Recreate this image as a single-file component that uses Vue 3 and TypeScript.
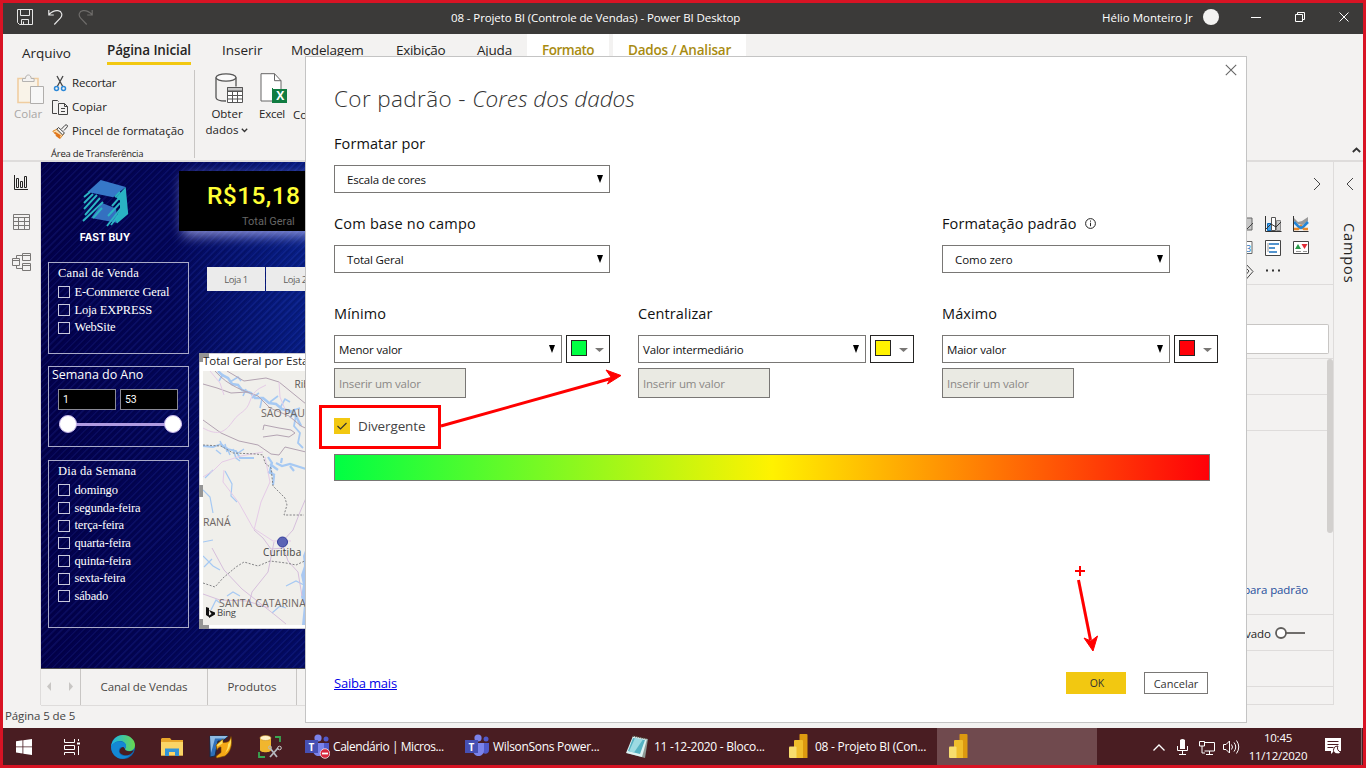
<script setup lang="ts">
interface Scale { label: string; option: string; cls: string }
interface TaskButton { label: string; icon: 'teams' | 'notepad' | 'pbi'; busy?: boolean; active?: boolean }

const channels: string[] = ['E-Commerce Geral', 'Loja EXPRESS', 'WebSite']
const weekdays: string[] = ['domingo', 'segunda-feira', 'terça-feira', 'quarta-feira', 'quinta-feira', 'sexta-feira', 'sábado']

const scales: Scale[] = [
  { label: 'Mínimo', option: 'Menor valor', cls: 'min' },
  { label: 'Centralizar', option: 'Valor intermediário', cls: 'mid' },
  { label: 'Máximo', option: 'Maior valor', cls: 'max' },
]

const tasks: TaskButton[] = [
  { label: 'Calendário | Micros...', icon: 'teams', busy: true },
  { label: 'WilsonSons Power...', icon: 'teams' },
  { label: '11 -12-2020 - Bloco...', icon: 'notepad' },
  { label: '08 - Projeto BI (Con...', icon: 'pbi' },
  { label: '', icon: 'pbi', active: true },
]
</script>

<template>
  <div class="screen">
    <header class="titlebar">
      <div class="quick">
        <svg width="16" height="16" viewBox="0 0 16 16" fill="none" stroke="#e6e6e6"><path d="M.5.5h15v15H2.500l-2-2zM3.500.5v6h9v-6M4.500 15.500v-5h7v5M6.500 12.500v3" /></svg>
        <svg width="15" height="16" viewBox="0 0 15 16" fill="none" stroke="#e6e6e6" stroke-width="1.200"><path d="M.8 1v5h5M1 5.500C4 2.500 7 1.200 10 1.700c4 .6 5 4.500 2.300 7.500L6.300 15.500" /></svg>
        <svg width="15" height="16" viewBox="0 0 15 16" fill="none" stroke="#6e6c6a" stroke-width="1.200"><path d="M14.200 1v5h-5M14 5.500C11 2.500 8 1.200 5 1.700c-4 .6-5 4.500-2.300 7.500L8.700 15.500" /></svg>
      </div>
      <span class="app-title">08 - Projeto BI (Controle de Vendas) - Power BI Desktop</span>
      <span class="user">Hélio Monteiro Jr</span>
      <span class="avatar"></span>
      <svg class="win-btns" width="100" height="12" viewBox="0 0 100 12" fill="none" stroke="#fff"><path d="M0 6.500h10M44.500 3.500h7v7h-7zM46.500 3.500v-2h7v7h-2M88.500 1.500l9 9M97.500 1.500l-9 9" /></svg>
    </header>

    <nav class="tabs">
      <span class="tab file">Arquivo</span>
      <span class="tab home">Página Inicial</span>
      <span class="tab insert">Inserir</span>
      <span class="tab model">Modelagem</span>
      <span class="tab view">Exibição</span>
      <span class="tab help">Ajuda</span>
      <span class="tab ctx format">Formato</span>
      <span class="tab ctx data">Dados / Analisar</span>
    </nav>

    <section class="ribbon">
      <div class="paste">
        <svg width="28" height="32" viewBox="0 0 28 32" fill="none"><path d="M1 4.500h20v24H1z" stroke="#f0cda0" stroke-width="1.600" fill="#f9f3e8" /><path d="M5.500 7.500v-3h3c0-2 1-3.500 2.800-3.500s2.800 1.500 2.800 3.500h3v3z" stroke="#b5b3b1" fill="#f3f2f1" /><path d="M13.500 12.500h13v17h-13z" stroke="#b0aeac" fill="#f7f7f7" /></svg>
        <span>Colar</span>
      </div>
      <div class="clip">
        <div class="clip-row">
          <svg width="17" height="17" viewBox="0 0 17 17" fill="none"><path d="M5 1l6 11M11 1L5 12" stroke="#444" stroke-width="1.300" /><circle cx="4.500" cy="13.500" r="2" stroke="#2b88d8" stroke-width="1.500" /><circle cx="11.500" cy="13.500" r="2" stroke="#2b88d8" stroke-width="1.500" /></svg>
          <span class="t-cut">Recortar</span>
        </div>
        <div class="clip-row">
          <svg width="17" height="17" viewBox="0 0 17 17" fill="none" stroke="#444"><path d="M5 14.500H.5V1.500h5l1 1M6.500 4.500h6l3 3v8h-9zM12.500 4.500v3h3M9 9.500h4M9 12.500h4" /></svg>
          <span class="t-copy">Copiar</span>
        </div>
        <div class="clip-row">
          <svg width="17" height="17" viewBox="0 0 17 17" fill="none"><path d="M.8 8.200l4.200-2 6.500 5-3.500 4.300z" fill="#fbdcae" stroke="#e08a26" /><path d="M2.500 9.500l6 3.500M4 12l4 3" stroke="#e0761b" stroke-width="1.800" /><path d="M6.500 4.500l6 5.500-2 1.800L4.800 6.300zM9.500 6L13 2.300c1-1.100 3.300-.2 2.300 1.500L12 7.500" stroke="#444" fill="#f3f2f1" /></svg>
          <span class="t-brush">Pincel de formatação</span>
        </div>
        <div class="group-name">Área de Transferência</div>
      </div>
      <div class="big get">
        <svg width="28" height="31" viewBox="0 0 28 31" fill="none" stroke="#555"><path d="M1 4.500v20c0 2 4 3.500 10 3.500M21 4.500v9" fill="none" stroke-width="1.300" /><ellipse cx="11" cy="4.500" rx="10" ry="3.700" fill="#fafafa" stroke-width="1.300" /><path d="M12.500 14.500h15v15h-15z" fill="#fff" /><path d="M12.500 14.500h15v3.500h-15z" fill="#c8c8c8" /><path d="M12.500 18.500h15M12.500 22.500h15M12.500 26h15M17.500 18v12M22.500 18v12" /></svg>
        <span>Obter</span>
        <span class="get2">dados<svg width="7" height="5" viewBox="0 0 7 5" fill="none" stroke="#333" stroke-width="1.300"><path d="M.8.8l2.700 2.700L6.200.8" /></svg></span>
      </div>
      <div class="big excel">
        <svg width="27" height="31" viewBox="0 0 27 31"><path d="M1 .7h13.500l6.500 7V28H1z" fill="#fff" stroke="#666" /><path d="M14.500.7v7H21" fill="none" stroke="#666" /><path d="M12 15h1v1h14v14H12z" fill="#107c41" /><text x="20" y="27" class="xl-mark">X</text></svg>
        <span>Excel</span>
      </div>
      <div class="conn">Co</div>
      <svg class="collapse" width="9" height="6" viewBox="0 0 9 6" fill="none" stroke="#333" stroke-width="1.800"><path d="M.8 5l3.700-3.500L8.200 5" /></svg>
    </section>

    <main class="workspace">
      <aside class="rail">
        <svg width="14" height="15" viewBox="0 0 14 15" fill="none" stroke="#252423"><path d="M.5 0v14.500H14M2.500 3.500h2v9h-2zM6.500 6.500h2v6h-2zM10.500 1.500h2v11h-2z" /></svg>
        <svg width="17" height="16" viewBox="0 0 17 16" fill="none" stroke="#797775"><path d="M.5.5h16v15H.5zM.5 3.500h16M.5 7.500h16M.5 11.500h16M5.500 3.500v12M11.500 3.500v12" /></svg>
        <svg width="19" height="19" viewBox="0 0 19 19" fill="none" stroke="#797775"><path d="M.5 5.500h7v7h-7zM.5 7.500h7M10.500.5h8v7h-8zM10.500 2.500h8M10.500 10.500h8v7h-8zM10.500 12.500h8M4.500 5.500v-3h6M4.500 12.500v3h6" /></svg>
      </aside>

      <div class="center">
        <div class="canvas">
          <div class="canvas-top">
            <div class="brand">
              <svg width="50" height="50" viewBox="80 178 50 50">
                <path d="M102 203l14 5.500 2 14.500-27-5z" fill="#3470c0" />
                <path d="M100.700 180l25 7-12.500 10.200-25.700-5.200z" fill="#3678c8" />
                <path d="M125.700 187l2.500 27-11.200 9.500-2-5 5-9 0-9-4-3z" fill="#29b3c3" />
                <path d="M90 192l-6 5M93 194l-9 9M97 195l-13 14M100 198l-15 17M103 202l-20 19M102 208l-9 10M120 192l-5 5M120 197l-8 9M120 203l-12 13M121 208l-14 18M118 216l-7 9" stroke="#2bb5c4" stroke-width="1.900" />
                <path d="M86 193h17v11" fill="none" stroke="#2bb5c4" stroke-width="0" />
              </svg>
              <span>FAST BUY</span>
            </div>
            <div class="kpi"><b>R$15,18</b><small>Total Geral</small></div>
          </div>
          <div class="canvas-body">
            <div class="slicers">
              <div class="slicer ch">
                <h4 class="ch-title">Canal de Venda</h4>
                <div v-for="c in channels" :key="c" class="opt"><i></i><span>{{ c }}</span></div>
              </div>
              <div class="slicer wk">
                <h4>Semana do Ano</h4>
                <div class="range"><span>1</span><span>53</span></div>
                <div class="slider"><i></i><i></i></div>
              </div>
              <div class="slicer dy">
                <h4>Dia da Semana</h4>
                <div v-for="d in weekdays" :key="d" class="opt"><i></i><span>{{ d }}</span></div>
              </div>
            </div>
            <div class="visuals">
              <div class="stores"><span>Loja 1</span><span>Loja 2</span></div>
              <div class="map">
                <div class="map-title">Total Geral por Esta</div>
                <svg width="160" height="254" viewBox="203 371 160 254" fill="none">
                  <path d="M203 371h160v254H203z" fill="#f0efeb" />
                  <path d="M306 548l-3 8 1 10-3 9 2 10-2 12 3 8-2 20h6z" fill="#a9c8f2" />
                  <path d="M218 371l4 4 6 3 4 6 6 1 4 5 9 3 4 5 8 0 6 5 7 1 6 5 8 2 6 5 5 10" stroke="#a6c9f3" stroke-width="2.600" />
                  <path d="M223 374l-4 7M230 382l8-5 3 4M246 389l-3 7M252 398l7-5M262 399l-2 9M270 402l8-6M280 408l5-9 5 3M288 412l12-4M295 409l-5 9" stroke="#a6c9f3" stroke-width="1.600" />
                  <path d="M296 415l-2 11 6 7-2 10 5 5M203 446l10 1 8-3 6 5 9 2 4 7 14 0" stroke="#a6c9f3" stroke-width="1.800" />
                  <path d="M220 441l3 6 4 1 3 7M227 452l-2-8M233 449l3 9 4 3M238 453l6-4M216 450l5 4" stroke="#a6c9f3" stroke-width="1.500" />
                  <path d="M268 457l4 6-2 7 4 6-1 9M276 463l6 3 8-2 16 5M281 463l1-5M290 466l4 5M270 464l8 6M268 472l7 3" stroke="#a6c9f3" stroke-width="2.200" />
                  <path d="M203 490l7 7 3 16M225 471l7 13-1 12 6 6M203 542l10-2M213 470l-8 8M203 556l10 10 7 4M204 567l8-8M211 610l5-10 4 3M286 586l10-5 8 4M240 596l-7-4-6 4M272 613l8-7 6 2" stroke="#a6c9f3" stroke-width="1.200" />
                  <path d="M215 371c14 16 30 20 43 25l12 12 19 8 12 10 17 8M203 384l14 4 14 5 17-1M227 371l17 10 22-3 13 4 27 22M203 420l18 13 18 8 19 4 13 9 8 1 6-8 21 5M263 430l1-5 15 3 12 2 4 3-6 4-12-2-14 2" stroke="#b3a3b2" />
                  <path d="M203 428c16 9 23 3 30-7s13-8 17-20 11-13 16-16M279 382l1 15 7 17M203 477l11-7 8-8 19-6 22-4M224 470l-1 12 16 21 14 25 20 13 18 0M254 530l7-28 9-20-5-25M210 371l10 12 4 12" stroke="#e5cbe7" />
                  <path d="M254 530l9 8 8 11 13-1M274 542l-6 30-16 20-3 12M282 542l11-12 7-18 6-14M282 543l6 18 10 11 4 24M203 594l17 6 27 1 22 7M212 548l12 22 18 19 33 26 11 9" stroke="#d6bfdc" />
                  <path d="M203 445l18 1 12 7 23 1 7 1 2 8 6 5 2 18 12 12 2 7-3 10 20 0M203 583l12 4 8-9 13-11 8-5 14 4 12-5 16 2 10 2 13-6" stroke="#77777b" stroke-width=".9" stroke-dasharray="2 1.500" />
                  <circle cx="282.500" cy="542" r="5" fill="#5b64b5" stroke="#333d9b" />
                  <text x="294.500" y="388" class="m1">Ribeirão</text>
                  <text x="261" y="416.500" class="m2">SÃO PAULO</text>
                  <text x="203" y="526" class="m2 pr">RANÁ</text>
                  <text x="263" y="555.500" class="m3">Curitiba</text>
                  <text x="219" y="606.500" class="m2 sc">SANTA CATARINA</text>
                  <path d="M206 607l3 1v9l-3-2zM209 610l6 2.500v2l-6 3.500v-2.500l2.500-1.500z" fill="#111" />
                  <text x="217" y="616" class="m3 bing">Bing</text>
                </svg>
                <i class="grip tl"></i><i class="grip ml"></i><i class="grip bl"></i>
              </div>
            </div>
          </div>
        </div>
        <div class="pages">
          <span class="arrows"><i class="prev"></i><i class="next"></i></span>
          <span class="p1">Canal de Vendas</span>
          <span class="p2">Produtos</span>
        </div>
      </div>

      <aside class="pane">
        <div class="viz-head"><svg width="8" height="14" viewBox="0 0 8 14" fill="none" stroke="#444"><path d="M1 1l6 6-6 6" /></svg></div>
        <div class="viz-icons">
          <svg width="86" height="68" viewBox="1247 214 86 68" fill="none">
            <path d="M1247 218h5v12h-5" fill="#c8c8c8" stroke="#666" /><path d="M1247 229l6-6" stroke="#444" />
            <path d="M1247 241.500h5v12h-5" stroke="#666" fill="#fff" /><text x="1246" y="251.500" class="three">3</text>
            <path d="M1245 263l8 8.500-7 8M1245 267l4 4-4 5" stroke="#444" />
            <path d="M1267.500 223.500h4v7h-4z" fill="#4ba3e8" stroke="#0d6ab8" /><path d="M1271.500 217.500h4v13h-4z" fill="#fff" stroke="#555" /><path d="M1276.500 220.500h4v10h-4z" fill="#c8c8c8" stroke="#888" /><path d="M1265.500 216v15.500h16M1266 229l5-5 5 3 5-5" stroke="#333" />
            <path d="M1294 218l4 4 4-1 6-4v4l-5 4-5-1-4-3z" fill="#999" /><path d="M1294 229h4l3-3 3 3h4" stroke="#e8892b" stroke-width="2.500" /><path d="M1294 222l4 4 3 2 3-2 4-4" stroke="#2485d6" stroke-width="2.500" /><path d="M1293.500 216v15.500h15" stroke="#333" />
            <path d="M1265.500 240.500h15v15h-15z" stroke="#444" fill="#fff" /><path d="M1268 243v9" stroke="#999" /><path d="M1269 244h10M1269 248h6M1269 252h8" stroke="#1b72be" stroke-width="1.500" />
            <path d="M1293.500 241.500h15v12h-15z" stroke="#444" fill="#fff" /><path d="M1295 249l3-5 3 5z" fill="#289a48" /><path d="M1301.500 244h6l-3 5z" fill="#e02b35" /><path d="M1296 251.500h5M1303 251.500h4" stroke="#999" />
            <path d="M1266 270.500h2M1272 270.500h2M1278 270.500h2" stroke="#333" stroke-width="2" />
          </svg>
        </div>
        <div class="search"><span></span></div>
        <div class="props">
          <div class="prop"></div><div class="prop"></div>
          <div class="prop tall"><span>para padrão</span></div>
          <div class="prop toggle"><span>vado</span><svg width="31" height="12" viewBox="0 0 31 12" fill="none" stroke="#605e5c"><circle cx="6" cy="6" r="5" stroke-width="1.800" fill="#fff" /><path d="M11 6h19" stroke-width="1.800" /></svg></div>
          <div class="prop"></div>
          <i class="thumb"></i>
        </div>
      </aside>
      <aside class="fields">
        <svg width="8" height="14" viewBox="0 0 8 14" fill="none" stroke="#444"><path d="M7 1L1 7l6 6" /></svg>
        <span>Campos</span>
      </aside>
    </main>

    <footer class="status">Página 5 de 5</footer>

    <div class="taskbar">
      <span class="ti w42"><svg width="16" height="16" viewBox="0 0 16 16" fill="#fff"><path d="M0 2.200L6.500 1.300v6.200H0zM7.300 1.200L16 0v7.500H7.300zM0 8.300h6.500v6.200L0 13.600zM7.300 8.300H16V16l-8.700-1.200z" /></svg></span>
      <span class="ti w52"><svg width="17" height="16" viewBox="0 0 17 16" fill="none" stroke="#fff"><path d="M1.500 0v3.500h10V0M1.500 16v-2.500h10V16M1.500 6.500h10v4h-10zM15.500 0v2M15.500 7v9" /><path d="M14 4.500h3" stroke-width="2" /></svg></span>
      <span class="ti w52"><svg width="24" height="24" viewBox="0 0 24 24">
        <defs><linearGradient id="eg" x1="0" x2="1"><stop offset="0" stop-color="#1bb5ea" /><stop offset="1" stop-color="#69d84d" /></linearGradient></defs>
        <circle cx="12" cy="12" r="12" fill="#0c69b8" /><path d="M0 12C1 4 6 0 12 0c7 0 12 5 12 10 0 4-3 6-6 6-3 0-4-1-4-2s1-1 1-3c0-3-3-5-6-5-4 0-8 3-9 6z" fill="url(#eg)" /><path d="M0 12c2-4 5-5.500 8.500-5.500C12 6.500 15 8 15 11c0 2-1 2-1 3-3-4-7-1-6 3 1 4 6 5 11 3-6 7-18 4-19-8z" fill="#1488d4" /><path d="M14 14c0 1.500 2 2.500 5 2.200 2-.2 3-1 3.500-1 .5.500-2 3.800-5 4.800-5 1-9-1-9-4 0-2 2-4 4-4z" fill="#4a1d22" /></svg></span>
      <span class="ti w46"><svg width="23" height="18" viewBox="0 0 23 18"><path d="M1 0h8l1.500 2H22v15.500H0V1z" fill="#e9a72b" /><path d="M0 4h22v13.500H0z" fill="#fbd566" /><path d="M4 18v-7.500h14V18h-4v-4H8v4z" fill="#3294d8" /></svg></span>
      <span class="ti w52"><svg width="24" height="24" viewBox="0 0 24 24"><path d="M1 1h18l-5 5H9L6 21l-5 1z" fill="#2f6fb8" stroke="#142c4a" /><path d="M1 1h18l-3 2.500H6L2 18z" fill="#8fbbe4" /><path d="M7 10l7-6v3.500c5 0 7-1 8-6 2 9-1 16-6 19.500l-8 2c-1 0-1-2 0-2.500l4-3V12c-2 0-3 1-4 3z" fill="#f6a916" stroke="#7a4a00" stroke-width=".6" /><path d="M8 10l5.500-5v3.500l-5 3zM22 3c.5 7-2 12-6 15 2-3 3-6 3-9 1.500-1 2.500-3 3-6z" fill="#ffe263" /></svg></span>
      <span class="ti w50"><svg width="24" height="24" viewBox="0 0 24 24" fill="none"><path d="M2 3v12c0 3 11 3 11 0V3z" fill="#f1b62e" /><ellipse cx="7.500" cy="3" rx="5.500" ry="2.500" fill="#fff1c7" stroke="#c8922a" stroke-width=".6" /><path d="M17 2h5v5M1 17v5h6" stroke="#39a852" stroke-width="1.800" /><path d="M12 13l7 9M20 13l-8 9" stroke="#b5b9be" stroke-width="1.800" /><circle cx="21.500" cy="13" r="1.800" stroke="#ccc" /><circle cx="12" cy="12.500" r="1.500" stroke="#bbb" /></svg></span>
      <div v-for="(t, i) in tasks" :key="i" class="task" :class="{ active: t.active }">
        <svg v-if="t.icon === 'teams'" width="25" height="25" viewBox="0 0 25 25">
          <circle cx="13" cy="4" r="3.600" fill="#7b83eb" /><circle cx="21" cy="5" r="2.500" fill="#5059c9" /><path d="M18 9h6v7c0 3-3 5-6 3z" fill="#5059c9" /><path d="M8 9h11v7c0 8-11 8-11 0z" fill="#7b83eb" /><path d="M0 6h13v13H0z" fill="#4650b4" /><text x="6.500" y="16.500" class="tm">T</text>
          <template v-if="t.busy"><circle cx="20" cy="19.500" r="4.800" fill="#d9273d" stroke="#eee" stroke-width=".8" /><path d="M17 19.500h6" stroke="#fff" stroke-width="1.800" /></template>
        </svg>
        <svg v-else-if="t.icon === 'notepad'" width="25" height="25" viewBox="0 0 25 25"><path d="M8 3l15 2-3 19-18-5z" fill="#8d9a97" /><path d="M8 2l14 3-5 18L1 19z" fill="#dff2f3" /><path d="M8 4l12 2-5 14-12-3z" fill="#55b2c3" /><path d="M10 4l8 1.500-9 13-5-1z" fill="#9cdae2" /><path d="M8 2l14 3" stroke="#4e4839" stroke-width="1.600" stroke-dasharray="1 1" /></svg>
        <svg v-else width="25" height="25" viewBox="-3 0 25 25"><path d="M12 0h6.500q1 0 1 1v23h-8V1q0-1 .5-1z" fill="#dc9a10" /><path d="M7 6h7q1 0 1 1v17H6V7q0-1 1-1z" fill="#f0be2b" /><path d="M2 12.500h5.500q1 0 1 1V24H2q-1 0-1-1v-9.500q0-1 1-1z" fill="#f8dd6d" /></svg>
        <span :class="'k' + i">{{ t.label }}</span>
      </div>
      <svg class="tray" width="90" height="20" viewBox="1151 738 90 20" fill="none" stroke="#fff">
        <path d="M1153.500 751.500l5.500-5.500 5.500 5.500" stroke-width="1.300" />
        <path d="M1177.500 747v4.500h10V747M1182.500 751.500v4M1179 755.500h7" /><path d="M1180 741q2.500-2 5 0v9h-5z" fill="#fff" stroke="none" />
        <path d="M1205 743.500h9.500v8.500h-10M1209.500 752v3.500M1206 755.500h7M1199.500 742.500h5v4.500h-5zM1202 747v7h3" />
        <path d="M1223.500 745.500h2.500l3.500-3.500v12l-3.500-3.500h-2.500zM1231.500 745.500q2 2.500 0 5M1234 743.500q3.500 4.500 0 9M1236.500 741.500q4.500 6.500 0 13" />
      </svg>
      <div class="clock"><span>10:45</span><span>11/12/2020</span></div>
      <svg class="notif" width="17" height="17" viewBox="0 0 17 17"><path d="M0 0h16v13h-7l-3 3v-3H0z" fill="#fff" /><path d="M2.500 3.500h11M2.500 6.500h11M2.500 9.500h6" stroke="#4a1d22" /><path d="M13 8a4 4 0 1 0 3 6 4 4 0 0 1-3-6z" fill="#fff" stroke="#4a1d22" /></svg>
      <i class="peek"></i>
    </div>

    <div class="dialog">
      <svg class="close" width="12" height="12" viewBox="0 0 12 12" fill="none" stroke="#666" stroke-width="1.100"><path d="M.8.800l10.400 10.400M11.200.8L.8 11.200" /></svg>
      <h1><span class="h-a">Cor padrão - </span><em>Cores dos dados</em></h1>
      <label>Formatar por</label>
      <div class="select wide"><span>Escala de cores</span><i></i></div>
      <div class="cols second">
        <div class="col">
          <label class="l-base">Com base no campo</label>
          <div class="select wide"><span>Total Geral</span><i></i></div>
        </div>
        <div class="col"></div>
        <div class="col">
          <label><span>Formatação padrão</span><svg width="11" height="11" viewBox="0 0 11 11" fill="none" stroke="#222"><circle cx="5.500" cy="5.500" r="4.900" /><path d="M5.500 2.500v1.200M5.500 4.700v3.500" /></svg></label>
          <div class="select indent"><span>Como zero</span><i></i></div>
        </div>
      </div>
      <div class="cols third">
        <div v-for="s in scales" :key="s.label" class="col">
          <label>{{ s.label }}</label>
          <div class="pick">
            <div class="select"><span>{{ s.option }}</span><i></i></div>
            <div class="swatch"><b :class="s.cls"></b><i></i></div>
          </div>
          <div class="input">Inserir um valor</div>
        </div>
      </div>
      <div class="diverge">
        <svg width="16" height="16" viewBox="0 0 16 16"><path d="M0 0h16v16H0z" fill="#f2c811" /><path d="M3.500 8l3 3 6-6" fill="none" stroke="#333" stroke-width="1.200" /></svg>
        <span>Divergente</span>
      </div>
      <div class="gradient"></div>
      <div class="actions">
        <a>Saiba mais</a>
        <button class="ok">OK</button>
        <button class="cancel">Cancelar</button>
      </div>
    </div>

    <svg class="notes" width="1366" height="768" viewBox="0 0 1366 768" fill="none" stroke="#f00">
      <path d="M320.500 406.500h119v41h-119z" stroke-width="3" />
      <path d="M441 426l170-47.500" stroke-width="3" />
      <path d="M621 375.500l-15-5.500 5 7-3.500 7z" fill="#f00" />
      <path d="M1078.500 580l12 60" stroke-width="3" />
      <path d="M1093 651l-9-13 7 3 6.500-5z" fill="#f00" />
      <path d="M1075 571h10M1080 566v10" stroke-width="2" />
    </svg>
  </div>
</template>

<style>
html, body { margin: 0; overflow: hidden; }
</style>

<style scoped>
* { box-sizing: border-box; }
.screen { position: relative; width: 1366px; height: 768px; border: 3px solid #d81324; background: #f3f2f1; display: flex; flex-direction: column; overflow: hidden; font-family: "Open Sans", "Noto Sans", sans-serif; font-size: 12px; color: #252423; white-space: nowrap; }
svg { display: block; flex: none; }

.titlebar { height: 31px; flex: none; background: #3b3a39; color: #fff; display: flex; align-items: center; padding-bottom: 3px; font-size: 11.5px; }
.quick { display: flex; gap: 15px; width: 448px; padding-left: 14px; }
.app-title { width: 651px; letter-spacing: -.1px; }
.user { width: 101px; letter-spacing: 0; }
.avatar { width: 16px; height: 16px; border-radius: 50%; background: #f3f2f1; margin-right: 32px; }

.tabs { height: 32px; flex: none; display: flex; font-size: 13.5px; line-height: 32px; }
.tab { flex: none; }
.file { width: 85px; margin-left: 19px; padding-top: 3px; }
.home { width: 84px; margin-right: 31px; font-weight: 600; height: 31px; border-bottom: 3px solid #f2c811; letter-spacing: -.13px; }
.insert { width: 69px; }
.model { width: 105px; letter-spacing: -.2px; }
.view { width: 81px; letter-spacing: -.3px; }
.help { width: 50px; letter-spacing: -.2px; }
.ctx { background: #fff; color: #a88b10; font-weight: 600; height: 34px; padding-left: 15px; letter-spacing: -.2px; }
.format { width: 82px; margin-right: 4px; letter-spacing: -.5px; }
.data { width: 133px; }

.ribbon { height: 96px; flex: none; display: flex; border-bottom: 2px solid #dedcdb; font-size: 11.5px; line-height: 16px; }
.paste { width: 49px; padding: 8px 0 0 11px; color: #a9a7a5; }
.paste svg { margin: 0 0 0 3px; }
.clip { width: 143px; height: 88px; margin-top: 4px; padding-top: 1px; border-right: 1px solid #c8c6c4; }
.clip-row { height: 24px; display: flex; align-items: center; gap: 3px; letter-spacing: -.06px; }
.t-cut { letter-spacing: -.2px; }
.group-name { font-size: 9.5px; line-height: 21px; margin-left: -1px; letter-spacing: -.23px; }
.big { display: flex; flex-direction: column; align-items: center; padding-top: 8px; }
.big > svg { margin-bottom: 2px; }
.get { width: 64px; }
.get > svg { margin: -1px 0 2px 4px; }
.get2 { display: flex; align-items: center; gap: 3px; }
.excel { width: 26px; margin-right: 1px; letter-spacing: -.3px; }
.excel > svg { margin: -1px 0 2px 3px; }
.conn { padding: 41px 0 0 7px; width: 1066px; }
.collapse { margin-top: 81px; }
.xl-mark { font: bold 12px "Open Sans", sans-serif; fill: #fff; text-anchor: middle; }

.workspace { flex: 1; min-height: 0; display: flex; }
.rail { width: 38px; flex: none; border-right: 1px solid #dedcdb; display: flex; flex-direction: column; align-items: center; padding: 13px 1px 0 0; }
.rail svg:nth-child(2) { margin-top: 24px; }
.rail svg:nth-child(3) { margin-top: 23px; }
.center { width: 1206px; flex: none; display: flex; flex-direction: column; }
.canvas { height: 507px; flex: none; border-bottom: 1px solid #4c4c50;
  background:
    repeating-linear-gradient(135deg, rgba(90, 120, 240, .09) 0 1px, rgba(0, 0, 20, .12) 2px 3px, transparent 4px 5px),
    radial-gradient(ellipse 170px 330px at 300px 110px, rgba(14, 57, 180, .55), transparent),
    linear-gradient(90deg, #02004c 0, #030b66 260px); }
.canvas-top { height: 100px; display: flex; }
.brand { width: 138px; padding: 16px 10px 0 0; display: flex; flex-direction: column; align-items: center; color: #fff; font: bold 10.3px/16px "Inter", sans-serif; }
.brand svg { margin-bottom: 1px; }
.kpi { width: 260px; height: 60px; margin-top: 9px; background: #000; box-shadow: 4px 5px 12px rgba(190, 195, 255, .7); padding-left: 28px; }
.kpi b { display: block; font: 500 24.5px/50px Roboto, sans-serif; height: 43px; color: #ffff35; letter-spacing: .4px; }
.kpi small { display: block; font: 11px/16px Roboto, sans-serif; color: #666; padding-left: 35px; }
.canvas-body { display: flex; }
.slicers { width: 141px; margin-left: 7px; }
.slicer { border: 1px solid #a9aac8; color: #fff; font: 12.5px/18px "Liberation Serif", serif; letter-spacing: -.17px; }
.slicer h4 { margin: 0 0 0 9px; font-weight: 400; font-size: 12.5px; line-height: 20px; letter-spacing: .2px; }
.ch { height: 92px; margin-bottom: 12px; }
.wk { height: 81px; margin-bottom: 13px; }
.dy { height: 168px; }
.opt { display: flex; align-items: center; height: 17.650px; padding-left: 9px; gap: 4.5px; }
.opt i { width: 12px; height: 12px; border: 1px solid #c8c8dc; }
.opt i { margin-top: 1px; }
.opt span { padding-top: .5px; }
.wk h4 { font: 12.5px/16px "Open Sans", sans-serif; margin-left: 3px; letter-spacing: -.03px; }
.range { display: flex; gap: 4px; padding: 6px 0 0 9px; }
.range span { width: 58px; height: 21px; background: #000; border: 1px solid #8a8a96; font: 10.5px/19px Roboto, sans-serif; padding-left: 4px; }
.slider { display: flex; justify-content: space-between; align-items: center; margin: 5px 6px 0 10px; height: 18px; background: linear-gradient(#b09be0, #b09be0) center / 100% 3px no-repeat; }
.slider i { width: 18px; height: 18px; border-radius: 50%; background: #fff; border: 1px solid #c7b7ea; }
.visuals { margin-left: 10px; }
.stores { display: flex; gap: 1px; padding: 5px 0 0 8px; height: 91px; }
.stores span { width: 58px; height: 24px; background: #ebebeb; color: #605e5c; font-size: 9.5px; line-height: 25px; text-align: center; letter-spacing: -.5px; }
.map { position: relative; width: 300px; height: 276px; background: #fff; border: 1px solid #c9c9d0; padding-left: 3px; }
.map-title { font: 11.5px/14px "Open Sans", sans-serif; height: 17px; color: #252423; }
.grip { position: absolute; background: #959595; left: -1px; width: 4px; height: 12px; }
.tl { top: -1px; width: 10px; height: 4px; }
.tl::after, .bl::before { content: ""; position: absolute; left: 0; top: 0; width: 4px; height: 9px; background: #959595; }
.bl::before { top: -6px; }
.ml { top: 131px; }
.bl { bottom: -1px; width: 10px; height: 4px; }
.m1, .m2, .m3 { font: 10px "Open Sans", sans-serif; fill: #5b5654; }
.m2 { font-size: 10.5px; fill: #6d6663; }
.sc { letter-spacing: .13px; }
.m3 { fill: #444; letter-spacing: .2px; }
.bing { font-size: 9.5px; letter-spacing: -.2px; }

.pages { flex: 1; display: flex; border-bottom: 1px solid #dedcdb; font-size: 11.5px; line-height: 36px; color: #4a4846; }
.pages > span { border-right: 1px solid #c8c6c4; text-align: center; }
.arrows { width: 40px; display: flex; padding: 13px 0 0 6px; gap: 18px; }
.arrows i { width: 4px; height: 9px; background: #c8c6c4; clip-path: polygon(100% 0, 100% 100%, 0 50%); }
.arrows .next { clip-path: polygon(0 0, 100% 50%, 0 100%); }
.p1 { width: 127px; letter-spacing: -.12px; }
.p2 { width: 89px; }

.pane { width: 87px; flex: none; border-right: 1px solid #dedcdb; border-bottom: 1px solid #dedcdb; display: flex; flex-direction: column; }
.viz-head { height: 52px; padding: 15px 0 0 66px; }
.viz-icons { height: 71px; border-bottom: 1px solid #dedcdb; }
.three { font: 9px "Open Sans", sans-serif; fill: #1b72be; }
.search { height: 74px; border-bottom: 1px solid #dedcdb; padding: 39px 4px 0 0; }
.search span { display: block; height: 30px; background: #fff; border: 1px solid #c8c6c4; border-left: 0; border-radius: 0 2px 2px 0; }
.props { flex: 1; position: relative; }
.prop { height: 36px; border-bottom: 1px solid #dedcdb; display: flex; align-items: center; }
.tall { height: 184px; align-items: flex-end; justify-content: flex-end; padding: 0 25px 15px 0; color: #1f4e9c; font-size: 11.5px; line-height: 18px; letter-spacing: -.1px; }
.toggle { justify-content: flex-end; gap: 4px; padding-right: 27px; font-size: 11.5px; padding-top: 1px; }
.thumb { position: absolute; right: 0; top: 0; width: 6px; height: 174px; border-radius: 3px; background: #d2d0ce; }
.fields { flex: 1; display: flex; flex-direction: column; align-items: center; padding-top: 15px; }
.fields svg { margin-left: 3px; }
.fields span { writing-mode: vertical-rl; font-size: 14.5px; margin: 32px 0 0 2px; letter-spacing: .9px; }

.status { height: 23px; flex: none; padding-left: 2px; font-size: 11.5px; line-height: 22px; letter-spacing: -.1px; color: #444; }

.taskbar { height: 37px; flex: none; display: flex; align-items: center; background: #491d22; color: #fff; }
.ti { display: flex; justify-content: center; }
.w42 { width: 42px; } .w46 { width: 46px; } .w50 { width: 46px; margin-right: 4px; } .w52 { width: 52px; }
.task { width: 160px; height: 37px; display: flex; align-items: center; gap: 3px; padding-left: 8px; font-size: 12px; }
.active { background: #704a4e; }
.k0 { letter-spacing: -.43px; } .k1 { letter-spacing: -.31px; } .k2, .k3 { letter-spacing: -.25px; padding-left: 1px; } .k3 { padding-left: 2px; }
.tm { font: bold 10px "Open Sans", sans-serif; fill: #fff; text-anchor: middle; }
.tray { margin-left: 54px; }
.clock { width: 75px; display: flex; flex-direction: column; align-items: center; line-height: 18px; font-size: 11.5px; letter-spacing: -.25px; padding: 1px 1px 0 0; }
.notif { margin-left: 9px; }
.peek { width: 1px; height: 37px; margin-left: 19px; background: #80666a; }

.dialog { position: absolute; left: 302px; top: 53px; width: 942px; height: 667px; background: #fff; border: 1px solid #c4c4c4; padding: 27px 28px 0; color: #111; }
.close { position: absolute; right: 9px; top: 7px; }
h1 { margin: 0 0 20px; font-size: 22.5px; line-height: 30px; font-weight: 300; color: #333; white-space: pre; }
.h-a { letter-spacing: .38px; }
label { display: flex; align-items: center; gap: 8px; height: 20px; margin-bottom: 11px; font-size: 14.5px; line-height: 20px; padding-bottom: 1px; letter-spacing: .1px; }
.l-base { letter-spacing: .22px; }
.select { width: 228px; height: 28px; border: 1px solid #797775; display: flex; align-items: center; justify-content: space-between; padding: 1px 6px 0 4px; font-size: 11.5px; letter-spacing: -.18px; }
.select i { width: 6px; height: 8px; background: #000; clip-path: polygon(0 0, 100% 0, 50% 100%); margin-bottom: 1px; }
.wide { width: 276px; padding-left: 12px; }
.indent { padding-left: 12px; letter-spacing: -.05px; }
.cols { display: flex; gap: 28px; }
.col { width: 276px; flex: none; }
.second { margin-top: 21px; }
.third { margin-top: 31px; }
.pick { display: flex; gap: 4px; }
.swatch { width: 44px; height: 28px; border: 1px solid #252423; display: flex; align-items: center; padding-left: 4px; gap: 8px; }
.swatch b { width: 16px; height: 16px; border: 1px solid #252423; margin-bottom: 2px; }
.swatch i { width: 9px; height: 4px; background: #797775; clip-path: polygon(0 0, 100% 0, 50% 100%); margin-top: 2px; }
.min { background: #00ff43; } .mid { background: #fff200; } .max { background: #ff0008; }
.input { width: 132px; height: 30px; margin-top: 5px; border: 1px solid #797775; background: #eaeae3; color: #8a8886; padding-left: 4px; font-size: 11.5px; line-height: 29px; letter-spacing: -.2px; }
.diverge { display: flex; align-items: center; gap: 8px; height: 16px; margin: 20px 0; font-size: 13.5px; letter-spacing: -.12px; color: #444; }
.gradient { width: 876px; height: 27px; border: 1px solid #797775; background: linear-gradient(90deg, #00ff43, #fff200 50%, #ff0008); }
.actions { display: flex; align-items: center; margin-top: 191px; height: 22px; }
.actions a { width: 732px; color: #0000e8; text-decoration: underline; font-size: 13px; letter-spacing: -.2px; }
button { height: 22px; border: 0; padding: 0; font: 11px "Open Sans", sans-serif; color: #333; }
.ok { width: 60px; background: #f2c811; margin-right: 18px; font-size: 10.5px; padding-left: 2px; }
.cancel { width: 64px; border: 1px solid #797775; background: #fff; }
.notes { position: absolute; left: -3px; top: -3px; pointer-events: none; }
</style>
